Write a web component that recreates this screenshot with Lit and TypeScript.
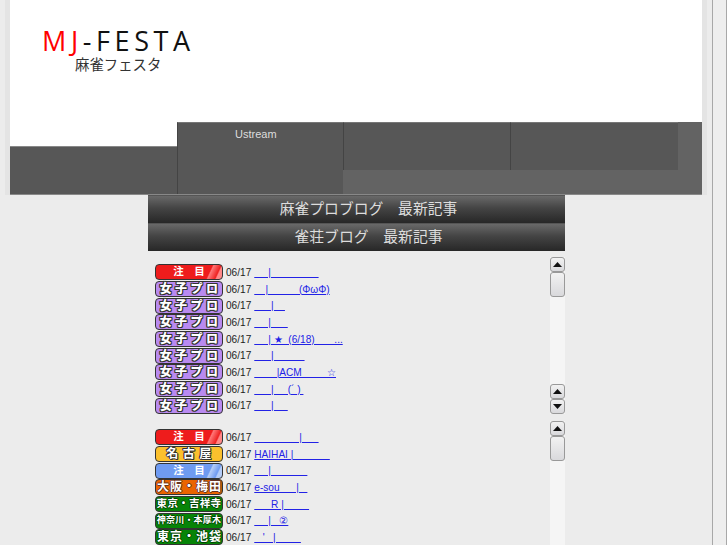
import { LitElement, html, css } from "lit";
import { customElement } from "lit/decorators.js";

const gap = (px: number) => "\u00a0".repeat(Math.max(0, Math.round(px / 2.78)));

type Row = { cls: string; label: string; link: string };
const list1: Row[] = [
  { cls: "red", label: "注　目", link: gap(15) + "|" + gap(48) },
  { cls: "purple", label: "女子プロ", link: gap(12) + "|" + gap(31) + "(ΦωΦ)" },
  { cls: "purple", label: "女子プロ", link: gap(18) + "|" + gap(12) },
  { cls: "purple", label: "女子プロ", link: gap(15) + "|" + gap(18) },
  { cls: "purple", label: "女子プロ", link: gap(15) + "|" + gap(3) + "★" + gap(5) + "(6/18)" + gap(19) + "..." },
  { cls: "purple", label: "女子プロ", link: gap(18) + "|" + gap(30) },
  { cls: "purple", label: "女子プロ", link: gap(22) + "|" + gap(0) + "ACM" + gap(25) + "☆" },
  { cls: "purple", label: "女子プロ", link: gap(18) + "|" + gap(15) + "(´ )" + gap(4) },
  { cls: "purple", label: "女子プロ", link: gap(18) + "|" + gap(15) },
];
const list2: Row[] = [
  { cls: "red", label: "注　目", link: gap(44.5) + "|" + gap(18) },
  { cls: "yellow", label: "名古屋", link: "HAIHAI" + gap(3) + "|" + gap(36) },
  { cls: "blue", label: "注　目", link: gap(15) + "|" + gap(35) },
  { cls: "orange", label: "大阪・梅田", link: "e-sou" + gap(17) + "|" + gap(9) },
  { cls: "green small", label: "東京・吉祥寺", link: gap(17) + "R" + gap(4) + "|" + gap(26) },
  { cls: "green tiny", label: "神奈川・本厚木", link: gap(15) + "|" + gap(9) + "②" },
  { cls: "green wide", label: "東京・池袋", link: gap(9) + "'" + gap(7) + "|" + gap(24) },
];

@customElement("app-root")
export class AppRoot extends LitElement {
  static styles = css`
    :host {
      display: flex;
      height: 545px;
      overflow: hidden;
      background: #ececec;
      font-family: "Liberation Sans", Arial, sans-serif;
    }
    .page { width: 712px; flex: none; }
    .strip {
      width: 13px;
      flex: none;
      border-left: 1px solid #a8a8a8;
      border-right: 1px solid #a8a8a8;
      background: #eee;
    }
    .top {
      margin: 0 5px;
      padding: 0 5px;
      height: 195px;
      background: #e4e4e4;
      box-sizing: border-box;
    }
    .brand {
      height: 122px;
      background: #fff;
      box-sizing: border-box;
      padding: 27px 0 0 32px;
    }
    .logo {
      font-family: "Open Sans", sans-serif;
      font-size: 27px;
      line-height: 28px;
      letter-spacing: 4.6px;
      color: #111;
      white-space: nowrap;
    }
    .logo span { color: #f00; }
    .kana {
      margin: 0 0 0 33px;
      font-family: "Noto Sans CJK JP", sans-serif;
      font-size: 14.4px;
      line-height: 18px;
      color: #333;
      white-space: nowrap;
    }
    .nav {
      display: flex;
      height: 72px;
      background: #636363;
      border-bottom: 1px solid #888;
    }
    .nav > div { flex: none; box-sizing: border-box; background-color: #575757; }
    .home-wrap { width: 167px; background: #fff !important; }
    .home { margin-top: 24px; height: 48px; background: #575757; border-top: 1px solid #888; box-sizing: border-box; }
    .item {
      width: 167px;
      border-top: 1px solid #777;
      border-left: 1px solid #444;
      color: #ddd;
      font-size: 11px;
      line-height: 22px;
    }
    .tall { width: 166px; height: 72px; padding-left: 57px; }
    .short { height: 48px; }
    .last { width: 168px; }
    .content { margin-left: 148px; width: 417px; }
    .bar {
      height: 28px;
      box-sizing: border-box;
      padding-left: 24px;
      text-align: center;
      font-family: "Noto Sans CJK JP", sans-serif;
      font-size: 14.8px;
      line-height: 24px;
      color: #ddd;
      background: linear-gradient(#696969, #444 45%, #272727);
      border-top: 1px solid #555;
    }
    .frame {
      display: flex;
      justify-content: space-between;
      height: 157px;
      margin-bottom: 7px;
      overflow: hidden;
    }
    .bars { margin-bottom: 6px; }
    .rows { padding: 7px 0 0 7px; }
    .second { padding-top: 8px; }
    .row {
      display: flex;
      align-items: center;
      gap: 3px;
      height: 16.7px;
      font-size: 10.1px;
      color: #222;
      white-space: nowrap;
    }
    .row a { color: #2222e6; text-decoration: underline; }
    .badge {
      width: 68px;
      height: 16px;
      flex: none;
      box-sizing: border-box;
      border: 1.5px solid #333;
      border-radius: 4px;
      text-align: center;
      font-family: "Noto Sans CJK JP", sans-serif;
      font-weight: 700;
      font-size: 10.5px;
      line-height: 12.5px;
      color: #fff;
      white-space: nowrap;
    }
    .red { background: linear-gradient(115deg, #ee1c1c 78%, #f77 80%, #e22 90%, #f88 92%); }
    .blue { background: linear-gradient(115deg, #6f9bf2 78%, #b5cdf8 80%, #6f9bf2 90%, #b5cdf8 92%); }
    .purple {
      background: #b98af0;
      letter-spacing: 3.4px;
      padding-left: 3px;
      font-size: 12px;
      font-weight: 900;
      text-shadow: 1px 0 #333, -1px 0 #333, 0 1px #333, 0 -1px #333, 1px 1px #333, -1px -1px #333, 1px -1px #333, -1px 1px #333;
    }
    .yellow {
      background: #fbc02d;
      font-size: 12px;
      letter-spacing: 4.5px;
      padding-left: 4px;
      text-shadow: 1px 0 #333, -1px 0 #333, 0 1px #333, 0 -1px #333, 1px 1px #333, -1px -1px #333;
    }
    .orange {
      background: #ea6400;
      font-size: 12px;
      letter-spacing: 1px;
      padding-left: 1px;
      text-shadow: 1px 0 #632, -1px 0 #632, 0 1px #632, 0 -1px #632;
    }
    .green { background: #078407; text-shadow: 1px 0 #040, -1px 0 #040, 0 1px #040, 0 -1px #040; }
    .wide { font-size: 12px; letter-spacing: 1px; padding-left: 1px; }
    .small { font-size: 10.5px; letter-spacing: 0.3px; }
    .tiny { font-size: 9px; letter-spacing: 0.2px; }
    .scroll {
      width: 15px;
      flex: none;
      display: flex;
      flex-direction: column;
      background: #f5f5f5;
    }
    .btn, .thumb {
      flex: none;
      box-sizing: border-box;
      border: 1px solid #999;
      border-radius: 3px;
      background: linear-gradient(#f2f2f2, #d9d9dc);
    }
    .btn {
      height: 15px;
      display: flex;
      align-items: center;
      justify-content: center;
    }
    .thumb { height: 25px; }
    .fill { flex: 1; }
    .btn svg { display: block; }
  `;

  private arrow(down = false) {
    return html`<div class="btn">
      <svg width="9" height="5" viewBox="0 0 9 5">
        <path d=${down ? "M0 0H9L4.5 5Z" : "M0 5H9L4.5 0Z"} fill="#111"></path>
      </svg>
    </div>`;
  }

  private rows(list: Row[], second = false) {
    return html`<div class="rows ${second ? "second" : ""}">
      ${list.map(
        (r) => html`<div class="row">
          <div class="badge ${r.cls}">${r.label}</div>
          <span>06/17</span>
          <a href="#">${r.link}</a>
        </div>`
      )}
    </div>`;
  }

  render() {
    return html`
      <div class="page">
        <div class="top">
          <div class="brand">
            <div class="logo"><span>MJ</span>-FESTA</div>
            <div class="kana">麻雀フェスタ</div>
          </div>
          <div class="nav">
            <div class="home-wrap"><div class="home"></div></div>
            <div class="item tall">Ustream</div>
            <div class="item short"></div>
            <div class="item short last"></div>
          </div>
        </div>
        <div class="content">
          <div class="bars">
            <div class="bar">麻雀プロブログ　最新記事</div>
            <div class="bar">雀荘ブログ　最新記事</div>
          </div>
          <div class="frame">
            ${this.rows(list1)}
            <div class="scroll">
              ${this.arrow()}
              <div class="thumb"></div>
              <div class="fill"></div>
              ${this.arrow()} ${this.arrow(true)}
            </div>
          </div>
          <div class="frame">
            ${this.rows(list2, true)}
            <div class="scroll">
              ${this.arrow()}
              <div class="thumb"></div>
              <div class="fill"></div>
            </div>
          </div>
        </div>
      </div>
      <div class="strip"></div>
    `;
  }
}
